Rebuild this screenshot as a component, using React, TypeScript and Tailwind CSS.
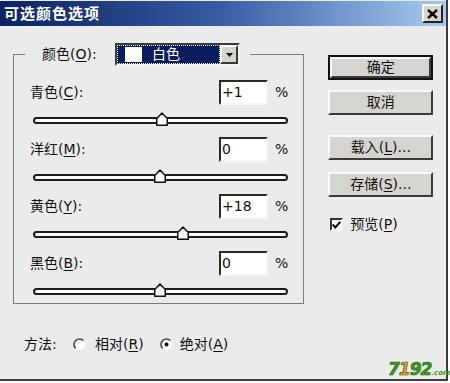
import React from "react";

const FONT = { fontFamily: '"DejaVu Sans", "Noto Sans CJK SC", sans-serif' };

function U({ c }: { c: string }) {
  return <span className="underline underline-offset-2 decoration-1">{c}</span>;
}

function Slider({ pos }: { pos: number }) {
  return (
    <div className="relative mt-[9px] ml-[3px] flex h-[12px] items-center">
      <div className="h-[7px] w-full rounded-full border-2 border-[#1c1c1c] bg-white" />
      <svg
        className="absolute top-[-2px]"
        style={{ left: pos - 6 }}
        width="12"
        height="14"
        viewBox="0 0 12 14"
      >
        <polygon
          points="0.75,13.25 0.75,6.5 6,1 11.25,6.5 11.25,13.25"
          fill="#fff"
          stroke="#111"
          strokeWidth="1.5"
          strokeLinejoin="round"
        />
      </svg>
    </div>
  );
}

function Row({ label, u, value, pos }: { label: string; u: string; value: string; pos: number }) {
  return (
    <div className="flex flex-col">
      <div className="flex h-[25px] items-center">
        <div className="w-[189px] text-[14px] text-[#111]">
          {label}(<U c={u} />):
        </div>
        <div className="flex h-[25px] w-[49px] items-center border-2 border-t-[#2a2a2a] border-l-[#2a2a2a] border-r-[#f6f6f6] border-b-[#f6f6f6] bg-white pl-[1px] text-[14px] text-[#111]">
          {value}
        </div>
        <div className="ml-[7px] text-[14px] text-[#111]">%</div>
      </div>
      <Slider pos={pos} />
    </div>
  );
}

function Btn({ children, def }: { children: React.ReactNode; def?: boolean }) {
  return (
    <div className={def ? "h-[25px] w-[105px] border-2 border-[#111]" : "h-[25px] w-[105px]"}>
      <div className="flex h-full w-full items-center justify-center border-2 border-t-[#fafafa] border-l-[#fafafa] border-r-[#3a3a3a] border-b-[#3a3a3a] bg-[#d6d4ce] text-[14px] text-[#111]">
        {children}
      </div>
    </div>
  );
}

function Radio({ on }: { on?: boolean }) {
  return (
    <svg width="13" height="13" viewBox="0 0 13 13">
      <circle cx="6.5" cy="6.5" r="5.5" fill="#fff" />
      <path d="M10.4 2.6 A5.5 5.5 0 1 0 2.6 10.4" fill="none" stroke="#444" strokeWidth="1.6" />
      {on && <circle cx="6.5" cy="6.5" r="2" fill="#111" />}
    </svg>
  );
}

export default function App() {
  return (
    <div className="h-[383px] w-[450px] bg-white" style={FONT}>
      <div className="relative flex h-[381px] w-[448px] flex-col border-r-2 border-b-2 border-r-[#3c3c3c] border-b-[#3c3c3c] bg-[#ebebeb]">
        {/* title bar */}
        <div className="mt-[1px] flex h-[25px] items-center justify-between bg-gradient-to-r from-[#0c2262] via-[#3a5da4] to-[#a9cbf1] pl-[4px] pr-[3px]">
          <span
            className="text-[15px] font-bold tracking-[1px] text-white"
            style={{ fontFamily: '"Noto Sans CJK SC", sans-serif' }}
          >
            可选颜色选项
          </span>
          <div className="flex h-[19px] w-[21px] items-center justify-center border-2 border-t-[#fafafa] border-l-[#fafafa] border-r-[#222] border-b-[#222] bg-[#d8d6d0]">
            <svg width="11" height="10" viewBox="0 0 11 10">
              <path d="M1 1 L10 9 M10 1 L1 9" stroke="#000" strokeWidth="2.4" />
            </svg>
          </div>
        </div>

        {/* body */}
        <div className="flex flex-1 pl-[13px]">
          <div className="flex flex-col">
            <fieldset className="mt-[17px] w-[291px] border border-[#7c7c7c] pb-[6px]">
              <legend className="ml-[11px] flex items-center pl-[17px] pr-[10px]">
                <span className="w-[73px] text-[14px] text-[#111]">
                  颜色(<U c="O" />):
                </span>
                <div className="flex h-[23px] w-[125px] items-stretch border-2 border-t-[#3a3a3a] border-l-[#3a3a3a] border-r-[#f4f4f4] border-b-[#f4f4f4] bg-[#0b1c5e]">
                  <div className="flex flex-1 items-center border border-dotted border-white pl-[7px]">
                    <div className="h-[15px] w-[17px] bg-white" />
                    <span className="ml-[10px] text-[14px] text-white">白色</span>
                  </div>
                  <div className="flex w-[18px] items-center justify-center border-2 border-t-[#fafafa] border-l-[#fafafa] border-r-[#3a3a3a] border-b-[#3a3a3a] bg-[#d6d4ce]">
                    <svg width="7" height="4" viewBox="0 0 7 4">
                      <path d="M0 0 H7 L3.5 4 Z" fill="#000" />
                    </svg>
                  </div>
                </div>
              </legend>
              <div className="flex flex-col gap-[11px] pl-[16px] pr-[15px] pt-[14px]">
                <Row label="青色" u="C" value="+1" pos={129} />
                <Row label="洋红" u="M" value="0" pos={127} />
                <Row label="黄色" u="Y" value="+18" pos={150} />
                <Row label="黑色" u="B" value="0" pos={127} />
              </div>
            </fieldset>

            <div className="ml-[11px] mt-[30px] flex h-[20px] items-center text-[14px] text-[#111]">
              <span className="w-[49px]">方法:</span>
              <span className="flex items-center">
                <Radio />
              </span>
              <span className="ml-[9px]">
                相对(<U c="R" />)
              </span>
              <span className="ml-[16px] flex items-center">
                <Radio on />
              </span>
              <span className="ml-[7px]">
                绝对(<U c="A" />)
              </span>
            </div>
          </div>

          <div className="ml-[24px] mt-[29px] flex flex-col">
            <Btn def>确定</Btn>
            <div className="mt-[10px]">
              <Btn>取消</Btn>
            </div>
            <div className="mt-[20px]">
              <Btn>
                载入(<U c="L" />)...
              </Btn>
            </div>
            <div className="mt-[12px]">
              <Btn>
                存储(<U c="S" />)...
              </Btn>
            </div>
            <div className="ml-[2px] mt-[17px] flex items-center text-[14px] text-[#111]">
              <div className="flex h-[13px] w-[13px] items-center justify-center border-2 border-t-[#333] border-l-[#333] border-r-[#f4f4f4] border-b-[#f4f4f4] bg-white">
                <svg width="9" height="8" viewBox="0 0 9 8">
                  <path d="M0.8 3.5 L3.3 6.5 L8.3 0.8" fill="none" stroke="#000" strokeWidth="2" />
                </svg>
              </div>
              <span className="ml-[7px]">
                预览(<U c="P" />)
              </span>
            </div>
          </div>
        </div>

        {/* watermark */}
        <div className="absolute left-[388px] top-[361px] flex items-end italic">
          <span
            className="text-[17px] font-black leading-none tracking-[-1px] text-[#3f9a1e]"
            style={{ fontFamily: '"DejaVu Sans", sans-serif', WebkitTextStroke: "0.6px #1d5a0c" }}
          >
            7<span className="text-[#e8a317]">1</span>92
          </span>
          <span className="mb-[1px] text-[7px] font-bold leading-none text-[#3f9a1e]">.com</span>
        </div>
      </div>
    </div>
  );
}
